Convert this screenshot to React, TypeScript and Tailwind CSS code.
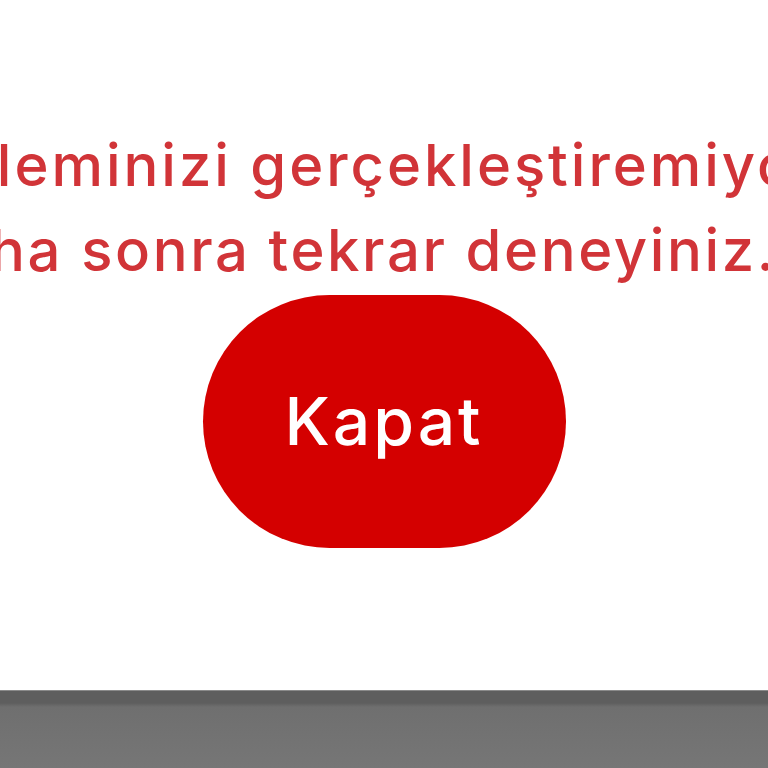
export default function App() {
  return (
    <div className="w-[768px] h-[768px] overflow-hidden bg-white flex flex-col font-['Inter','Liberation_Sans',sans-serif]">
      <div className="flex-1 flex flex-col items-center pt-[123px] overflow-hidden">
        <div className="flex flex-col items-center whitespace-nowrap text-[58px] leading-[85px] font-medium text-[#d13438]">
          <span className="ml-[90px] tracking-[0.051em]">İşleminizi gerçekleştiremiyoruz.</span>
          <span className="mr-[284px] tracking-[0.045em]">Lütfen daha sonra tekrar deneyiniz.</span>
        </div>
        <button className="mt-[2px] w-[363px] h-[253px] shrink-0 rounded-full bg-[#d40000] text-white text-[66px] font-medium tracking-[0.045em]">
          Kapat
        </button>
      </div>
      <div className="h-[78px] shrink-0 border-t border-[#8a8a8a] bg-[linear-gradient(to_bottom,#5e5e5e_0px,#5e5e5e_12px,#6f6f6f_16px,#767676_100%)]" />
    </div>
  );
}
